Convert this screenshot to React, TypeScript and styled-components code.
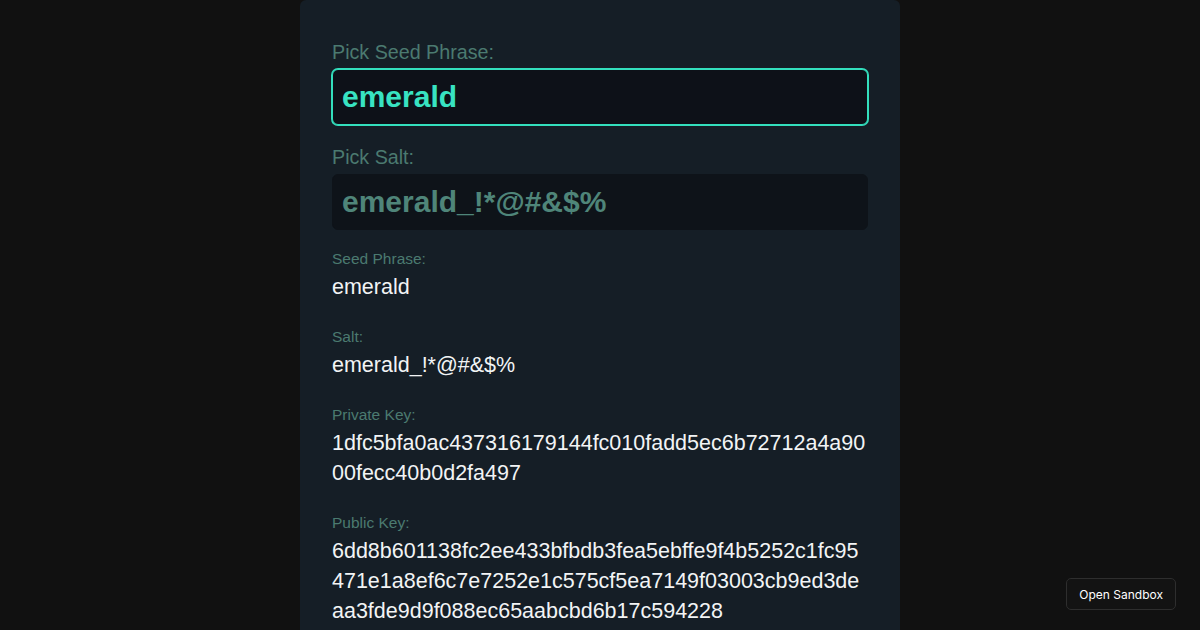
import React, { useState } from "react";
import styled, { createGlobalStyle } from "styled-components";

const GlobalStyle = createGlobalStyle`
  html, body {
    margin: 0;
    padding: 0;
    background: #111111;
    font-family: "Liberation Sans", Arial, sans-serif;
  }
  * { box-sizing: border-box; }
`;

const Page = styled.div`
  min-height: 100vh;
  background: #111111;
`;

const Panel = styled.main`
  width: 600px;
  margin: 0 auto;
  min-height: 720px;
  padding: 41px 32px 32px;
  background: #151e26;
  border-radius: 6px;
`;

const Form = styled.div`
  display: flex;
  flex-direction: column;
  gap: 21px;
`;

const Field = styled.div`
  display: flex;
  flex-direction: column;
  gap: 5px;
`;

const FieldLabel = styled.label`
  font-size: 19.7px;
  line-height: 23px;
  color: #4b7a70;
`;

const SeedInput = styled.input<{ $active?: boolean }>`
  width: 100%;
  height: 56px;
  padding: 0 9px;
  border-radius: 6px;
  border: 1px solid ${(p) => (p.$active ? "#33dfbd" : "#0e1319")};
  box-shadow: ${(p) => (p.$active ? "0 0 0 1px #33dfbd" : "none")};
  background: ${(p) => (p.$active ? "#0d1118" : "#0e1319")};
  color: ${(p) => (p.$active ? "#38e3c2" : "#4f8579")};
  font-family: "Liberation Sans", Arial, sans-serif;
  font-size: 30px;
  font-weight: 700;
  outline: none;
`;

const Results = styled.div`
  margin-top: 19px;
`;

const Output = styled.div`
  margin-bottom: 25px;
`;

const OutputLabel = styled.div`
  font-size: 15.5px;
  line-height: 20px;
  color: #4b7a70;
  margin-bottom: 3px;
`;

const OutputValue = styled.div`
  font-size: 21.5px;
  line-height: 30px;
  color: #f2f4f5;
  word-break: break-all;
`;

const SandboxButton = styled.button`
  position: fixed;
  right: 24px;
  bottom: 20px;
  height: 32px;
  padding: 0 12px;
  background: #131313;
  border: 1px solid #2e2e2e;
  border-radius: 5px;
  color: #ffffff;
  font-family: Inter, "Liberation Sans", sans-serif;
  font-size: 12px;
  cursor: pointer;
`;

const PRIVATE_KEY = "1dfc5bfa0ac437316179144fc010fadd5ec6b72712a4a9000fecc40b0d2fa497";
const PUBLIC_KEY =
  "6dd8b601138fc2ee433bfbdb3fea5ebffe9f4b5252c1fc95471e1a8ef6c7e7252e1c575cf5ea7149f03003cb9ed3deaa3fde9d9f088ec65aabcbd6b17c594228";

const App = () => {
  const [seed, setSeed] = useState("emerald");
  const [salt, setSalt] = useState("emerald_!*@#&$%");

  const outputs = [
    { label: "Seed Phrase:", value: seed },
    { label: "Salt:", value: salt },
    { label: "Private Key:", value: PRIVATE_KEY },
    { label: "Public Key:", value: PUBLIC_KEY },
  ];

  return (
    <Page>
      <GlobalStyle />
      <Panel>
        <Form>
          <Field>
            <FieldLabel>Pick Seed Phrase:</FieldLabel>
            <SeedInput $active value={seed} onChange={(e) => setSeed(e.target.value)} />
          </Field>
          <Field>
            <FieldLabel>Pick Salt:</FieldLabel>
            <SeedInput value={salt} onChange={(e) => setSalt(e.target.value)} />
          </Field>
        </Form>
        <Results>
          {outputs.map((o) => (
            <Output key={o.label}>
              <OutputLabel>{o.label}</OutputLabel>
              <OutputValue>{o.value}</OutputValue>
            </Output>
          ))}
        </Results>
      </Panel>
      <SandboxButton>Open Sandbox</SandboxButton>
    </Page>
  );
};

export default App;
